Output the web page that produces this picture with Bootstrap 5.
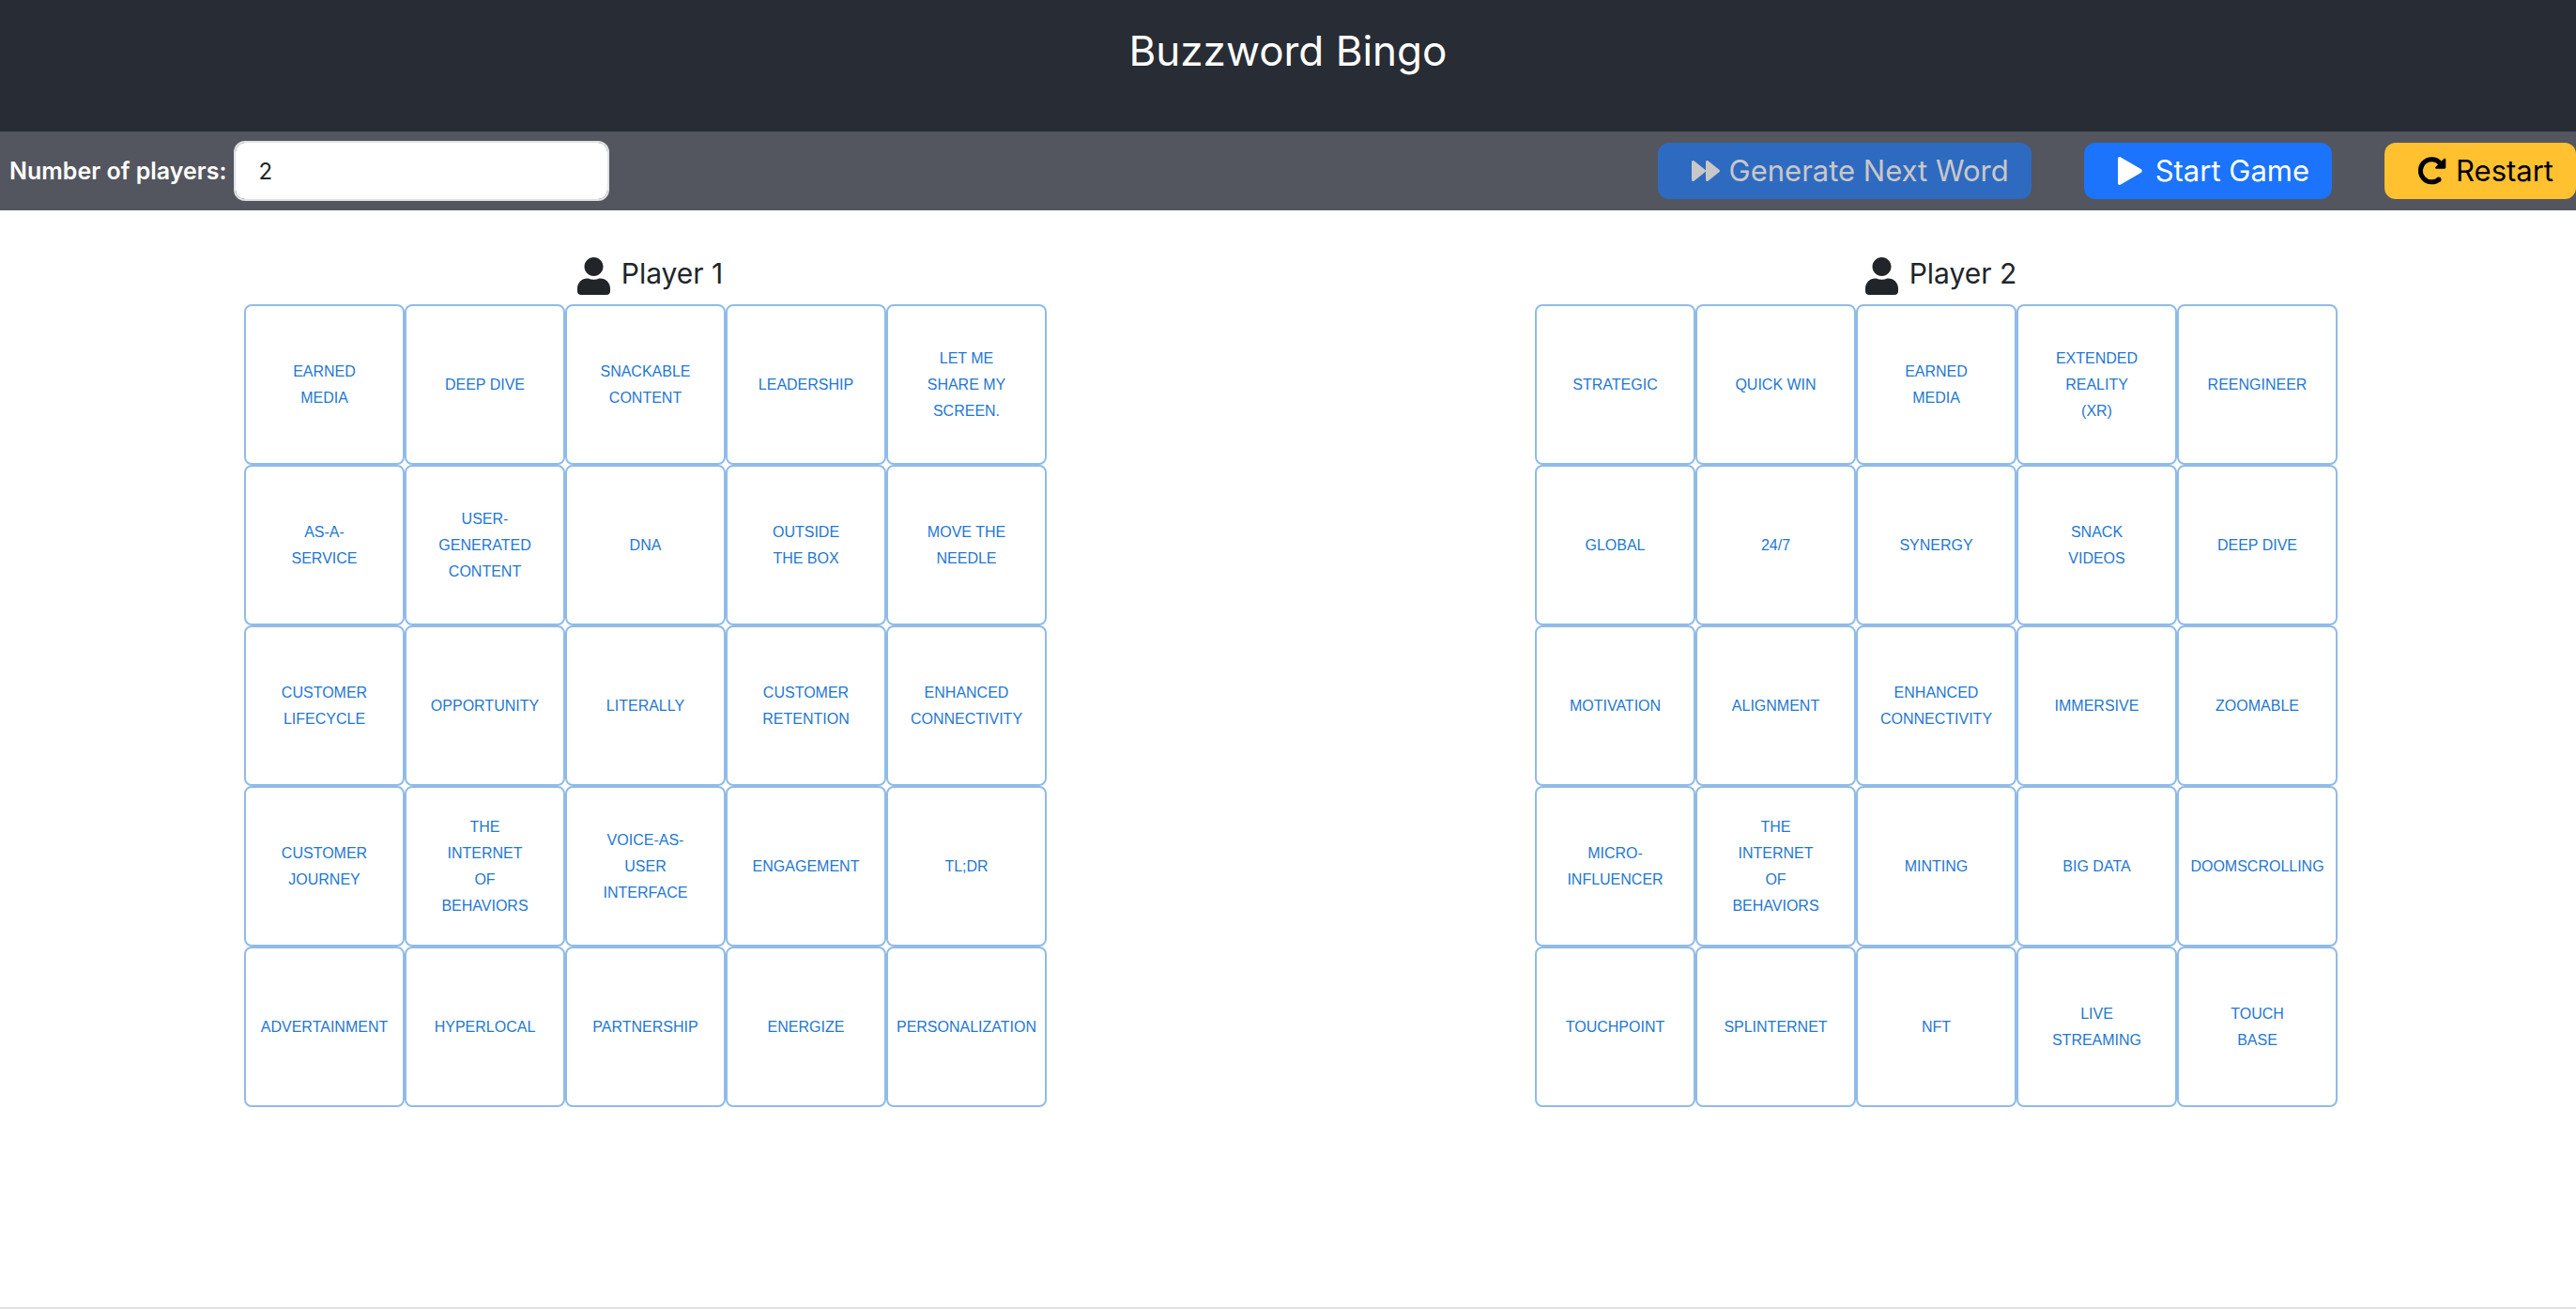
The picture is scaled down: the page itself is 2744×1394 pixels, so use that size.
<!DOCTYPE html>
<html lang="en">
<head>
<meta charset="utf-8">
<meta name="viewport" content="width=device-width, initial-scale=1">
<title>Buzzword Bingo</title>
<link href="https://cdn.jsdelivr.net/npm/bootstrap@5.3.0/dist/css/bootstrap.min.css" rel="stylesheet">
<style>
  body { font-family: Inter, "Liberation Sans", sans-serif; font-size: 24px; line-height: 36px; color: #212529; background: #fff; overflow-x: hidden; }
  .site-head { background: #282c34; color: #fff; padding: 24px 0 56px; }
  .site-head h1 { font-size: 44px; line-height: 60px; font-weight: 400; }
  .tool-bar { background: #53565e; padding: 10px 0 10px 10px; }
  .tool-bar label { color: #fff; font-size: 25px; font-weight: 600; }
  .tool-bar .form-control { width: 400px; height: 64px; padding: 12px 24px; border: 2px solid #dee2e6; border-radius: 12px; font-size: 24px; color: #212529; }
  .actions { gap: 56px; }
  .actions .btn { height: 60px; padding: 0 24px 0 36px; border: 0; border-radius: 12px; font-size: 31px; line-height: 48px; gap: 10px; }
  .btn-next, .btn-next:disabled { background: #2f6ac1; color: #c8c8c8; opacity: 1; }
  .btn-start, .btn-start:hover { background: #1b74fb; color: #fff; }
  .btn-again, .btn-again:hover { background: #ffc12f; color: #000; }
  .glyph { fill: currentColor; flex: none; }
  .boards { margin-right: -6px; }
  .player-name { font-size: 30px; line-height: 34px; font-weight: 400; gap: 12px; padding: 50px 0 10px 10px; }
  .bingo { display: grid; grid-template-columns: repeat(5, 171px); }
  .bingo button { display: flex; align-items: center; justify-content: center; height: 171px; padding: 12px 34px; background: #fff; border: 2px solid #90bbe8; border-radius: 8px; color: #1f78d1; font-family: "Liberation Sans", Arial, sans-serif; font-size: 16px; line-height: 28px; text-transform: uppercase; }
  .page-end { height: 2px; background: #e0e0e0; }
</style>
</head>
<body class="d-flex flex-column min-vh-100">
<header class="site-head text-center"><h1 class="m-0">Buzzword Bingo</h1></header>
<div class="tool-bar d-flex align-items-center justify-content-between">
  <div class="d-flex align-items-center gap-2">
    <label for="players">Number of players:</label>
    <input class="form-control" id="players" type="text" inputmode="numeric" value="2">
  </div>
  <div class="actions d-flex">
    <button type="button" class="btn btn-next d-flex align-items-center" disabled>
      <svg class="glyph" width="30" height="30" viewBox="0 0 30 30" aria-hidden="true"><path d="M0 5.400C0 4 1.500 3.500 2.500 4.300L14.300 13.700Q15 14.300 15 14.700V5.400C15 4 16.500 3.500 17.500 4.300L29.300 13.700Q30.700 15 29.300 16.300L17.500 25.700C16.500 26.500 15 26 15 24.600V15.300Q15 15.700 14.300 16.300L2.500 25.700C1.500 26.500 0 26 0 24.600z"/></svg>Generate Next Word</button>
    <button type="button" class="btn btn-start d-flex align-items-center">
      <svg class="glyph" width="30" height="30" viewBox="0 0 30 30" aria-hidden="true"><path d="M0 2C0 .3 1.500-.4 3 .4L24.500 13Q27 15 24.500 17L3 29.600C1.500 30.400 0 29.700 0 28z"/></svg>Start Game</button>
    <button type="button" class="btn btn-again d-flex align-items-center">
      <svg class="glyph" width="30" height="30" viewBox="0 0 30 30" aria-hidden="true"><path d="M22.500 23.600A12 12 0 1 1 23.600 7.200" fill="none" stroke="currentColor" stroke-width="5"/><circle cx="21.800" cy="24.200" r="2.600"/><path d="M27.300 2.100C28.200 1.200 29.300 1.700 29.300 2.900V11.300Q29.300 12.700 27.900 12.700H19.400C18.200 12.700 17.600 11.600 18.500 10.700z"/></svg>Restart</button>
  </div>
</div>
<main class="boards row g-0 flex-grow-1 align-content-start">
  <section class="col-6 d-flex flex-column align-items-center">
    <h2 class="player-name d-flex align-items-start m-0"><svg class="glyph" width="35" height="40" viewBox="0 0 448 512" aria-hidden="true"><path d="M224 256c70.700 0 128-57.300 128-128S294.700 0 224 0 96 57.300 96 128s57.300 128 128 128zm89.600 32h-16.700c-22.200 10.200-46.900 16-72.900 16s-50.600-5.800-72.900-16h-16.700C60.200 288 0 348.200 0 422.400V464c0 26.500 21.500 48 48 48h352c26.500 0 48-21.500 48-48v-41.600c0-74.200-60.200-134.400-134.400-134.400z"/></svg>Player 1</h2>
    <div class="bingo">
      <button type="button">Earned Media</button><button type="button">Deep Dive</button><button type="button">Snackable Content</button><button type="button">Leadership</button><button type="button">Let me share my screen.</button>
      <button type="button">As-a-Service</button><button type="button">User-generated content</button><button type="button">DNA</button><button type="button">Outside the box</button><button type="button">Move the needle</button>
      <button type="button">Customer Lifecycle</button><button type="button">Opportunity</button><button type="button">Literally</button><button type="button">Customer Retention</button><button type="button">Enhanced Connectivity</button>
      <button type="button">Customer Journey</button><button type="button">The Internet of Behaviors</button><button type="button">Voice-as-User Interface</button><button type="button">Engagement</button><button type="button">TL;DR</button>
      <button type="button">Advertainment</button><button type="button">Hyperlocal</button><button type="button">Partnership</button><button type="button">Energize</button><button type="button">Personalization</button>
    </div>
  </section>
  <section class="col-6 d-flex flex-column align-items-center">
    <h2 class="player-name d-flex align-items-start m-0"><svg class="glyph" width="35" height="40" viewBox="0 0 448 512" aria-hidden="true"><path d="M224 256c70.700 0 128-57.300 128-128S294.700 0 224 0 96 57.300 96 128s57.300 128 128 128zm89.600 32h-16.700c-22.200 10.200-46.900 16-72.900 16s-50.600-5.800-72.900-16h-16.700C60.200 288 0 348.200 0 422.400V464c0 26.500 21.500 48 48 48h352c26.500 0 48-21.500 48-48v-41.600c0-74.200-60.200-134.400-134.400-134.400z"/></svg>Player 2</h2>
    <div class="bingo">
      <button type="button">Strategic</button><button type="button">Quick win</button><button type="button">Earned Media</button><button type="button">Extended Reality (XR)</button><button type="button">Reengineer</button>
      <button type="button">Global</button><button type="button">24/7</button><button type="button">Synergy</button><button type="button">Snack Videos</button><button type="button">Deep Dive</button>
      <button type="button">Motivation</button><button type="button">Alignment</button><button type="button">Enhanced Connectivity</button><button type="button">Immersive</button><button type="button">Zoomable</button>
      <button type="button">Micro-Influencer</button><button type="button">The Internet of Behaviors</button><button type="button">Minting</button><button type="button">Big Data</button><button type="button">Doomscrolling</button>
      <button type="button">Touchpoint</button><button type="button">Splinternet</button><button type="button">NFT</button><button type="button">Live Streaming</button><button type="button">Touch Base</button>
    </div>
  </section>
</main>
<footer class="page-end"></footer>
<script src="https://cdn.jsdelivr.net/npm/bootstrap@5.3.0/dist/js/bootstrap.bundle.min.js"></script>
</body>
</html>
